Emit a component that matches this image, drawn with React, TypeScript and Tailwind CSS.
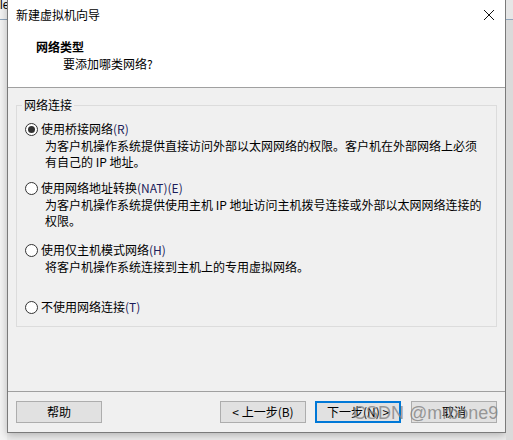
import React from "react";

const cjk = { fontFamily: '"Noto Sans CJK SC", "Noto Sans", sans-serif' };

function Radio({ checked }: { checked?: boolean }) {
  return (
    <span className="w-[13px] h-[13px] rounded-full border border-[#333333] bg-white flex items-center justify-center shrink-0">
      {checked && <span className="w-[7px] h-[7px] rounded-full bg-[#333333]" />}
    </span>
  );
}

function Option({
  label,
  hotkey,
  checked,
  lines,
  className,
}: {
  label: string;
  hotkey: string;
  checked?: boolean;
  lines?: string[];
  className?: string;
}) {
  return (
    <div className={className}>
      <div className="flex items-center h-4 pl-[8px]">
        <Radio checked={checked} />
        <span className="ml-[3px] leading-4">
          {label}
          <span className="text-[#1c1c5a]">{hotkey}</span>
        </span>
      </div>
      {lines && (
        <div className="pl-[28px] mt-px">
          {lines.map((l, i) => (
            <div key={i} className="leading-4 whitespace-nowrap">
              {l}
            </div>
          ))}
        </div>
      )}
    </div>
  );
}

function Btn({ children, primary }: { children: React.ReactNode; primary?: boolean }) {
  return (
    <button
      className={
        "w-[86px] h-[22px] bg-[#e1e1e1] text-[12px] leading-none text-black flex items-center justify-center " +
        (primary ? "border-2 border-[#0078d7]" : "border border-[#adadad]")
      }
    >
      {children}
    </button>
  );
}

export default function App() {
  return (
    <div className="w-[513px] h-[440px] bg-[#ececec] flex relative overflow-hidden text-[12px] text-black" style={cjk}>
      {/* desktop left strip */}
      <div className="w-[7px] shrink-0 bg-[#f3f3f3] flex flex-col">
        <div className="h-[20px] border-b border-[#8fa5bc] text-[12px] leading-[10px] overflow-hidden whitespace-nowrap" style={{ fontFamily: '"Liberation Sans", sans-serif' }}>
          le
        </div>
      </div>

      {/* dialog window */}
      <div className="w-[499px] h-[433px] shrink-0 border-x border-b border-[#7a7a7a] bg-[#f0f0f0] flex flex-col shadow-[0_2px_8px_rgba(0,0,0,0.25)]">
        {/* title bar */}
        <div className="h-[30px] bg-white flex items-center justify-between pl-[8px] pr-[9px]">
          <span className="leading-4">新建虚拟机向导</span>
          <svg width="12" height="12" viewBox="0 0 12 12" className="mr-[1px]">
            <path d="M1 1 L11 11 M11 1 L1 11" stroke="#111" strokeWidth="1" />
          </svg>
        </div>

        {/* header */}
        <div className="h-[58px] bg-white border-b border-[#a0a0a0] flex flex-col pt-[9px]">
          <div className="pl-[28px] font-bold leading-4">网络类型</div>
          <div className="pl-[55px] leading-4 mt-px">要添加哪类网络?</div>
        </div>

        {/* body */}
        <div className="flex-1 flex flex-col px-[8px]">
          <fieldset className="mt-[9px] border border-[#dcdcdc] px-0 pb-[12px] h-[230px]">
            <legend className="ml-[5px] px-[2px] leading-4">网络连接</legend>
            <Option
              className="mt-[8px]"
              checked
              label="使用桥接网络"
              hotkey="(R)"
              lines={["为客户机操作系统提供直接访问外部以太网网络的权限。客户机在外部网络上必须", "有自己的 IP 地址。"]}
            />
            <Option
              className="mt-[10px]"
              label="使用网络地址转换"
              hotkey="(NAT)(E)"
              lines={["为客户机操作系统提供使用主机 IP 地址访问主机拨号连接或外部以太网网络连接的", "权限。"]}
            />
            <Option className="mt-[13px]" label="使用仅主机模式网络" hotkey="(H)" lines={["将客户机操作系统连接到主机上的专用虚拟网络。"]} />
            <Option className="mt-[24px]" label="不使用网络连接" hotkey="(T)" />
          </fieldset>
        </div>

        {/* footer */}
        <div className="h-[41px] border-t border-[#a0a0a0] flex items-start pt-[9px] px-[8px]">
          <Btn>帮助</Btn>
          <div className="flex-1" />
          <Btn>&lt; 上一步(B)</Btn>
          <div className="ml-[9px]">
            <Btn primary>下一步(N) &gt;</Btn>
          </div>
          <div className="ml-[10px]">
            <Btn>取消</Btn>
          </div>
        </div>
      </div>

      {/* desktop right strip */}
      <div className="flex-1 flex flex-col bg-[#e6e6e6]">
        <div className="h-[20px] border-b border-[#8fa5bc]" />
        <div className="flex-1 bg-[#dadada]" />
      </div>

      {/* watermark */}
      <div
        className="absolute left-[353px] top-[402px] text-[18px] leading-[22px] text-[rgba(130,130,130,0.8)] whitespace-nowrap pointer-events-none"
        style={{ fontFamily: '"Liberation Sans", sans-serif' }}
      >
        CSDN @mrbone9
      </div>
    </div>
  );
}
